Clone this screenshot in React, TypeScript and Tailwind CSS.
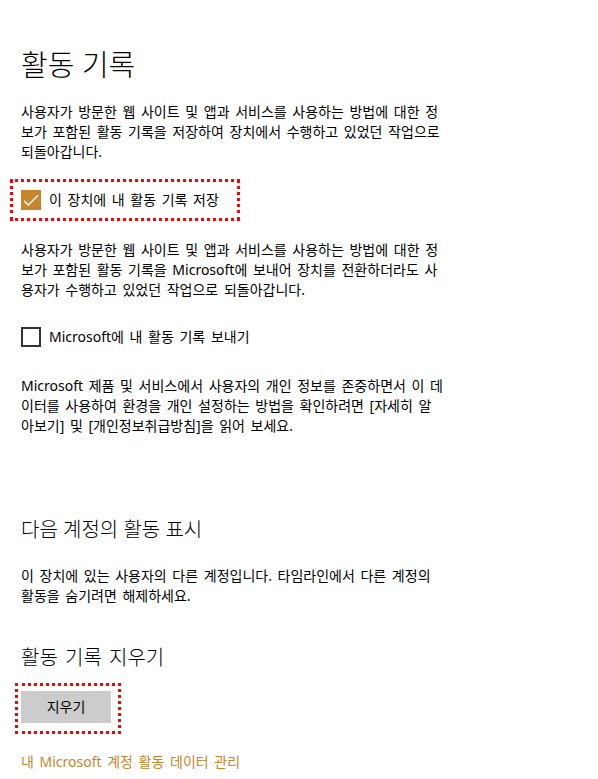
const body = "text-[14px] leading-[20px] [word-spacing:2px]";

function Lines({ lines, className }: { lines: string[]; className?: string }) {
  return (
    <div className={`${body} ${className ?? ""}`}>
      {lines.map((l) => (
        <div key={l} className="whitespace-nowrap">
          {l}
        </div>
      ))}
    </div>
  );
}

function CheckBox({ checked }: { checked: boolean }) {
  if (checked) {
    return (
      <span className="flex h-5 w-5 shrink-0 items-center justify-center bg-[#c8852c]">
        <svg viewBox="0 0 20 20" className="h-5 w-5" fill="none" stroke="#fff" strokeWidth={1.5}>
          <path d="M3 10.8 7.3 15 17 5.3" />
        </svg>
      </span>
    );
  }
  return <span className="h-5 w-5 shrink-0 border-2 border-[#333333] bg-white" />;
}

export default function App() {
  return (
    <div
      className="h-[779px] w-[598px] overflow-hidden bg-white pl-[21px] text-black"
      style={{ fontFamily: '"Noto Sans", "Noto Sans CJK KR", sans-serif' }}
    >
      <h1 className="mt-[47px] text-[29px] font-light leading-[36px]">활동 기록</h1>

      <Lines
        className="mt-[19px]"
        lines={[
          "사용자가 방문한 웹 사이트 및 앱과 서비스를 사용하는 방법에 대한 정",
          "보가 포함된 활동 기록을 저장하여 장치에서 수행하고 있었던 작업으로",
          "되돌아갑니다.",
        ]}
      />

      <div className="-ml-[11px] mt-[17px] inline-flex items-center gap-2 border-[3px] border-dotted border-[#ff0000] py-[8px] pl-[8px] pr-[18px]">
        <CheckBox checked />
        <span className={body}>이 장치에 내 활동 기록 저장</span>
      </div>

      <Lines
        className="mt-[19px]"
        lines={[
          "사용자가 방문한 웹 사이트 및 앱과 서비스를 사용하는 방법에 대한 정",
          "보가 포함된 활동 기록을 Microsoft에 보내어 장치를 전환하더라도 사",
          "용자가 수행하고 있었던 작업으로 되돌아갑니다.",
        ]}
      />

      <div className="mt-[27px] flex h-5 items-center gap-2">
        <CheckBox checked={false} />
        <span className={body}>Microsoft에 내 활동 기록 보내기</span>
      </div>

      <Lines
        className="mt-[29px]"
        lines={[
          "Microsoft 제품 및 서비스에서 사용자의 개인 정보를 존중하면서 이 데",
          "이터를 사용하여 환경을 개인 설정하는 방법을 확인하려면 [자세히 알",
          "아보기] 및 [개인정보취급방침]을 읽어 보세요.",
        ]}
      />

      <h2 className="mt-[80px] text-[20px] font-light leading-[28px]">다음 계정의 활동 표시</h2>

      <Lines
        className="mt-[22px]"
        lines={[
          "이 장치에 있는 사용자의 다른 계정입니다. 타임라인에서 다른 계정의",
          "활동을 숨기려면 해제하세요.",
        ]}
      />

      <h2 className="mt-[38px] text-[20px] font-light leading-[28px] [word-spacing:2px]">활동 기록 지우기</h2>

      <div className="-ml-[6px] mt-[11px] inline-flex border-[3px] border-dotted border-[#ff0000] pb-[8px] pl-[3px] pr-[7px] pt-[5px]">
        <button className={`flex h-8 w-[90px] items-center justify-center bg-[#cccccc] ${body}`}>
          지우기
        </button>
      </div>

      <div className="mt-[15px]">
        <a className={`${body} text-[#c8852c]`}>내 Microsoft 계정 활동 데이터 관리</a>
      </div>
    </div>
  );
}
